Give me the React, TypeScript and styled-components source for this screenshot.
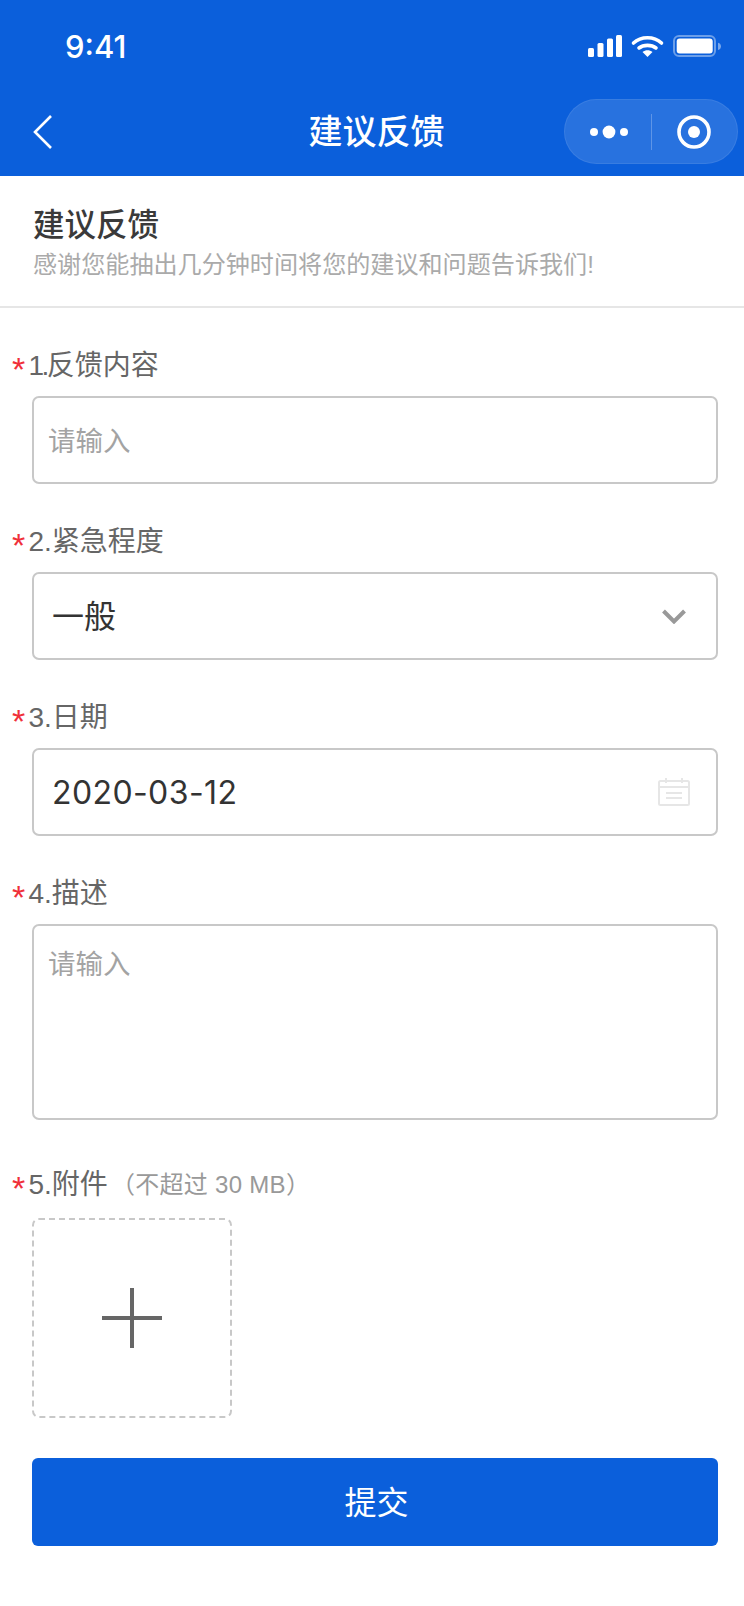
import React from 'react'
import styled, { createGlobalStyle } from 'styled-components'

const GlobalStyle = createGlobalStyle`
  html, body {
    margin: 0;
    padding: 0;
    background: #fff;
  }
  * {
    box-sizing: border-box;
  }
  body {
    font-family: "Liberation Sans", "Noto Sans CJK SC", sans-serif;
  }
`

const Page = styled.div`
  width: 744px;
  height: 1606px;
  overflow: hidden;
  background: #fff;
`

const Header = styled.header`
  height: 176px;
  background: #0b5fdb;
  color: #fff;
`

const StatusBar = styled.div`
  height: 99px;
  display: flex;
  align-items: flex-start;
  justify-content: space-between;
  padding: 28px 22px 0 65px;
`

const Clock = styled.span`
  font-family: Inter, "Liberation Sans", sans-serif;
  font-size: 31px;
  line-height: 38px;
  font-weight: 500;
`

const StatusIcons = styled.svg`
  display: block;
  margin-top: 7px;
`

const NavBar = styled.div`
  height: 65px;
  position: relative;
  display: flex;
  align-items: center;
  justify-content: space-between;
  padding: 0 6px 0 33px;
`

const NavTitle = styled.h1`
  position: absolute;
  left: 308.5px;
  top: 13px;
  margin: 0;
  font-size: 34px;
  line-height: 40px;
  font-weight: 500;
`

const Capsule = styled.div`
  width: 174px;
  height: 65px;
  border-radius: 33px;
  background: rgba(255, 255, 255, 0.12);
  border: 1px solid rgba(255, 255, 255, 0.08);
  display: flex;
  align-items: center;
`

const CapsulePart = styled.div`
  flex: 1;
  display: flex;
  align-items: center;
  justify-content: center;
`

const MoreDots = styled.svg`
  margin-left: 2px;
`

const CapsuleDivider = styled.div`
  width: 1px;
  height: 36px;
  background: rgba(255, 255, 255, 0.25);
`

const Intro = styled.section`
  height: 132px;
  padding: 28px 33px 0;
  border-bottom: 2px solid #e6e6e6;
`

const IntroTitle = styled.h2`
  margin: 0;
  font-size: 31.5px;
  line-height: 42px;
  font-weight: 500;
  color: #3a3a3a;
`

const IntroText = styled.p`
  margin: 2px 0 0;
  font-size: 24.1px;
  line-height: 34px;
  color: #aaa;
  white-space: nowrap;
`

const Form = styled.form`
  padding: 36px 26px 0 12px;
`

const Field = styled.div<{ $gap?: number }>`
  margin-bottom: ${props => props.$gap ?? 36}px;
`

const Label = styled.div<{ $gap?: number }>`
  height: 40px;
  margin-bottom: ${props => props.$gap ?? 12}px;
  padding-top: 2px;
  display: flex;
  align-items: center;
  font-size: 28px;
  line-height: 37px;
  color: #666;
`

const Star = styled.span`
  width: 16.5px;
  flex: none;
  padding-top: 8px;
  font-size: 34px;
  line-height: 32px;
  color: #f0303a;
`

const Num = styled.span<{ $tight?: boolean }>`
  letter-spacing: ${props => (props.$tight ? '-2.5px' : '0')};
`

const Hint = styled.span`
  margin-left: 3px;
  font-size: 24px;
  letter-spacing: 0.3px;
  color: #999;
`

const Box = styled.div<{ $height?: number; $top?: boolean }>`
  margin-left: 20px;
  height: ${props => props.$height ?? 88}px;
  border: 2px solid #c8c8c8;
  border-radius: 7px;
  display: flex;
  align-items: ${props => (props.$top ? 'flex-start' : 'center')};
  justify-content: space-between;
  padding: ${props => (props.$top ? '20px 26px 0 14px' : '3px 26px 0 14px')};
`

const Placeholder = styled.span`
  font-size: 27.5px;
  line-height: 38px;
  color: #a3a3a3;
`

const Value = styled.span`
  margin: -1px 0 0 4px;
  font-size: 32px;
  line-height: 40px;
  color: #333;
`

const DateValue = styled(Value)`
  font-family: Inter, "Liberation Sans", sans-serif;
  letter-spacing: 0.4px;
`

const Chevron = styled.svg`
  margin: -3px 4px 0 0;
`

const CalendarIcon = styled.svg`
  margin-top: -3px;
`

const Upload = styled.div`
  margin-left: 20px;
  width: 200px;
  height: 200px;
  border: 2px dashed #c8c8c8;
  border-radius: 7px;
  display: flex;
  align-items: center;
  justify-content: center;
`

const Submit = styled.button`
  display: block;
  width: 686px;
  height: 88px;
  margin: 40px 0 0 20px;
  padding: 0 0 4px 3px;
  border: 0;
  border-radius: 6px;
  background: #0b5fdb;
  color: #fff;
  font-family: inherit;
  font-size: 32px;
`

interface FormFieldProps {
  num: string
  label: string
  tight?: boolean
  hint?: string
  gap?: number
  labelGap?: number
  children: React.ReactNode
}

const FormField: React.FC<FormFieldProps> = ({ num, label, tight, hint, gap, labelGap, children }) => (
  <Field $gap={gap}>
    <Label $gap={labelGap}>
      <Star>*</Star>
      <Num $tight={tight}>{num}</Num>
      {label}
      {hint && <Hint>{hint}</Hint>}
    </Label>
    {children}
  </Field>
)

const App: React.FC = () => (
  <Page>
    <GlobalStyle />
    <Header>
      <StatusBar>
        <Clock>9:41</Clock>
        <StatusIcons width="134" height="23" viewBox="0 0 134 23" fill="none">
          <g fill="#fff">
            <rect x="0" y="13" width="6" height="9" rx="1.5" />
            <rect x="9.5" y="8" width="6" height="14" rx="1.5" />
            <rect x="19" y="3.5" width="6" height="18.5" rx="1.5" />
            <rect x="28" y="0" width="6" height="22" rx="1.5" />
          </g>
          <path d="M45.5 8 C53 1 66 1 73.5 8" stroke="#fff" strokeWidth="3.6" strokeLinecap="round" />
          <path d="M51 13 C55.5 9.5 63.5 9.5 68 13" stroke="#fff" strokeWidth="3.6" strokeLinecap="round" />
          <path d="M54.5 17 C57.5 14.8 61.5 14.8 64.5 17 L59.5 22 Z" fill="#fff" />
          <rect x="86" y="1" width="41" height="20" rx="5" stroke="#fff" strokeOpacity="0.4" strokeWidth="2" />
          <rect x="88.7" y="3.5" width="36" height="15" rx="3" fill="#fff" />
          <path d="M130 7.7 C132 8 133 9.7 133 11.3 C133 13 132 14.7 130 15 Z" fill="#fff" fillOpacity="0.45" />
        </StatusIcons>
      </StatusBar>
      <NavBar>
        <svg width="20" height="34" viewBox="0 0 20 34" fill="none">
          <path d="M18 1 L2 17 L18 33" stroke="#fff" strokeWidth="2.6" />
        </svg>
        <NavTitle>建议反馈</NavTitle>
        <Capsule>
          <CapsulePart>
            <MoreDots width="38" height="14" viewBox="0 0 38 14" fill="#fff">
              <circle cx="4" cy="7" r="4" />
              <circle cx="19" cy="7" r="6.4" />
              <circle cx="34" cy="7" r="4" />
            </MoreDots>
          </CapsulePart>
          <CapsuleDivider />
          <CapsulePart>
            <svg width="34" height="34" viewBox="0 0 34 34" fill="none">
              <circle cx="17" cy="17" r="15" stroke="#fff" strokeWidth="3.6" />
              <circle cx="17" cy="17" r="6" fill="#fff" />
            </svg>
          </CapsulePart>
        </Capsule>
      </NavBar>
    </Header>
    <Intro>
      <IntroTitle>建议反馈</IntroTitle>
      <IntroText>感谢您能抽出几分钟时间将您的建议和问题告诉我们!</IntroText>
    </Intro>
    <Form>
      <FormField num="1." label="反馈内容" tight>
        <Box>
          <Placeholder>请输入</Placeholder>
        </Box>
      </FormField>
      <FormField num="2." label="紧急程度">
        <Box>
          <Value>一般</Value>
          <Chevron width="24" height="15" viewBox="0 0 24 15" fill="none">
            <path d="M1.5 2 L12 12.5 L22.5 2" stroke="#999" strokeWidth="4" />
          </Chevron>
        </Box>
      </FormField>
      <FormField num="3." label="日期">
        <Box>
          <DateValue>2020-03-12</DateValue>
          <CalendarIcon width="32" height="28" viewBox="0 0 32 28" fill="none" stroke="#e6e6e6" strokeWidth="2">
            <rect x="1" y="3" width="30" height="24" rx="1.5" />
            <path d="M1 9 H31 M8 0 V5 M24 0 V5 M8 15 H24 M8 20 H24" />
          </CalendarIcon>
        </Box>
      </FormField>
      <FormField num="4." label="描述" gap={43}>
        <Box $height={196} $top>
          <Placeholder>请输入</Placeholder>
        </Box>
      </FormField>
      <FormField num="5." label="附件" hint="（不超过 30 MB）" gap={0} labelGap={15}>
        <Upload>
          <svg width="60" height="60" viewBox="0 0 60 60" fill="#666">
            <rect x="0" y="28" width="60" height="4" />
            <rect x="28" y="0" width="4" height="60" />
          </svg>
        </Upload>
      </FormField>
      <Submit type="button">提交</Submit>
    </Form>
  </Page>
)

export default App
